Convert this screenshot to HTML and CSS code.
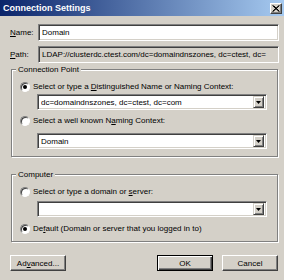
FILE: index.html
```html
<!DOCTYPE html>
<html lang="en">
<head>
    <meta charset="UTF-8">
    <title>Connection Settings</title>
    <link rel="stylesheet" href="styles.css">
</head>
<body>
    <div class="dialog">
        <div class="titlebar">
            <span class="title">Connection Settings</span>
            <span class="close-btn">
                <svg width="8" height="7" viewBox="0 0 8 7"><path d="M0.5 0.5 L7 6.5 M1.5 0.5 L7.5 6.5 M7 0.5 L0.5 6.5 M7.5 0.5 L1 6.5" stroke="#000" stroke-width="1"/></svg>
            </span>
        </div>
        <div class="content">
            <!-- Name / Path -->
            <div class="field-row">
                <span class="field-label"><u>N</u>ame:</span>
                <div class="edit">Domain</div>
            </div>
            <div class="field-row">
                <span class="field-label"><u>P</u>ath:</span>
                <div class="edit readonly">LDAP://clusterdc.ctest.com/dc=domaindnszones, dc=ctest, dc=</div>
            </div>

            <!-- Connection Point group -->
            <div class="group group-point">
                <span class="legend">Connection Point</span>
                <div class="radio-row">
                    <span class="radio checked"></span>
                    <span>Select or type a <u>D</u>istinguished Name or Naming Context:</span>
                </div>
                <div class="combo">
                    <span class="combo-text">dc=domaindnszones, dc=ctest, dc=com</span>
                    <span class="combo-btn"><svg width="5" height="3" viewBox="0 0 5 3"><polygon points="0,0 5,0 2.5,3" fill="#000"/></svg></span>
                </div>
                <div class="radio-row">
                    <span class="radio"></span>
                    <span>Select a well known N<u>a</u>ming Context:</span>
                </div>
                <div class="combo combo-last">
                    <span class="combo-text">Domain</span>
                    <span class="combo-btn"><svg width="5" height="3" viewBox="0 0 5 3"><polygon points="0,0 5,0 2.5,3" fill="#000"/></svg></span>
                </div>
            </div>

            <!-- Computer group -->
            <div class="group group-computer">
                <span class="legend">Computer</span>
                <div class="radio-row">
                    <span class="radio"></span>
                    <span>Select or type a domain or <u>s</u>erver:</span>
                </div>
                <div class="combo combo-short">
                    <span class="combo-text"></span>
                    <span class="combo-btn"><svg width="5" height="3" viewBox="0 0 5 3"><polygon points="0,0 5,0 2.5,3" fill="#000"/></svg></span>
                </div>
                <div class="radio-row radio-last">
                    <span class="radio checked"></span>
                    <span>De<u>f</u>ault (Domain or server that you logged in to)</span>
                </div>
            </div>

            <!-- Buttons -->
            <div class="button-row">
                <span class="btn">Ad<u>v</u>anced...</span>
                <div class="button-right">
                    <span class="btn default">OK</span>
                    <span class="btn">Cancel</span>
                </div>
            </div>
        </div>
    </div>
</body>
</html>
```
FILE: styles.css
```css
* {
    box-sizing: border-box;
}
body {
    margin: 0;
    background-color: #d4d0c8;
    font-family: "Liberation Sans", Arial, sans-serif;
    font-size: 8px;
    color: #000;
}
.dialog {
    width: 284px;
    height: 280px;
    background-color: #d4d0c8;
    overflow: hidden;
}
.titlebar {
    height: 16px;
    display: flex;
    align-items: center;
    justify-content: space-between;
    padding: 0 2px 0 3px;
    background: linear-gradient(to right, #0a246a, #a6caf0);
}
.title {
    color: #fff;
    font-weight: bold;
    font-size: 9px;
}
.close-btn {
    width: 12px;
    height: 11px;
    display: flex;
    align-items: center;
    justify-content: center;
    background-color: #d4d0c8;
    border: 1px solid;
    border-color: #fff #404040 #404040 #fff;
    box-shadow: inset -1px -1px 0 #808080;
}
.content {
    padding: 8px 5px 0 10px;
}
.field-row {
    display: flex;
    align-items: center;
    margin-bottom: 5px;
}
.field-label {
    width: 28px;
}
.edit {
    flex: 1;
    height: 17px;
    line-height: 15px;
    padding-left: 3px;
    background-color: #fff;
    border: 1px solid;
    border-color: #808080 #fff #fff #808080;
    box-shadow: inset 1px 1px 0 #404040, inset -1px -1px 0 #d4d0c8;
    white-space: nowrap;
    overflow: hidden;
}
.edit.readonly {
    background-color: #d4d0c8;
}
.group {
    margin: 0 1px 0 1px;
    border: 1px solid #808080;
    box-shadow: inset 1px 1px 0 #fff, 1px 1px 0 #fff;
}
.group-point {
    margin-top: 6px;
    padding: 1px 0 7px 0;
}
.group-computer {
    margin-top: 17px;
    padding: 1px 0 6px 0;
}
.legend {
    display: inline-block;
    margin: -6px 0 0 4px;
    padding: 0 2px;
    height: 10px;
    line-height: 10px;
    background-color: #d4d0c8;
    vertical-align: top;
}
.radio-row {
    display: flex;
    align-items: center;
    height: 13px;
    padding-left: 8px;
    gap: 3px;
}
.radio {
    position: relative;
    width: 10px;
    height: 10px;
    border-radius: 50%;
    background-color: #fff;
    border: 1px solid;
    border-color: #808080 #fff #fff #808080;
    box-shadow: inset 1px 1px 0 #404040;
}
.radio.checked::after {
    content: "";
    position: absolute;
    left: 2px;
    top: 2px;
    width: 4px;
    height: 4px;
    border-radius: 50%;
    background-color: #000;
}
.combo {
    display: flex;
    align-items: center;
    height: 16px;
    margin: 1px 10px 4px 25px;
    padding: 2px 2px 2px 3px;
    background-color: #fff;
    border: 1px solid;
    border-color: #808080 #fff #fff #808080;
    box-shadow: inset 1px 1px 0 #404040, inset -1px -1px 0 #d4d0c8;
}
.combo-last {
    margin-top: 6px;
    margin-bottom: 0;
}
.combo-short {
    margin-top: 3px;
    margin-bottom: 5px;
}
.combo-text {
    flex: 1;
    white-space: nowrap;
    overflow: hidden;
}
.combo-btn {
    width: 11px;
    height: 12px;
    display: flex;
    align-items: center;
    justify-content: center;
    background-color: #d4d0c8;
    border: 1px solid;
    border-color: #d4d0c8 #404040 #404040 #d4d0c8;
    box-shadow: inset 1px 1px 0 #fff, inset -1px -1px 0 #808080;
}
.button-row {
    display: flex;
    justify-content: space-between;
    margin-top: 13px;
    padding-right: 1px;
}
.button-right {
    display: flex;
    gap: 9px;
}
.btn {
    width: 56px;
    height: 16px;
    display: flex;
    align-items: center;
    justify-content: center;
    background-color: #d4d0c8;
    border: 1px solid;
    border-color: #fff #404040 #404040 #fff;
    box-shadow: inset -1px -1px 0 #808080;
}
.btn.default {
    border: 1px solid #000;
    box-shadow: inset 1px 1px 0 #fff, inset -1px -1px 0 #404040, inset -2px -2px 0 #808080;
}
```
